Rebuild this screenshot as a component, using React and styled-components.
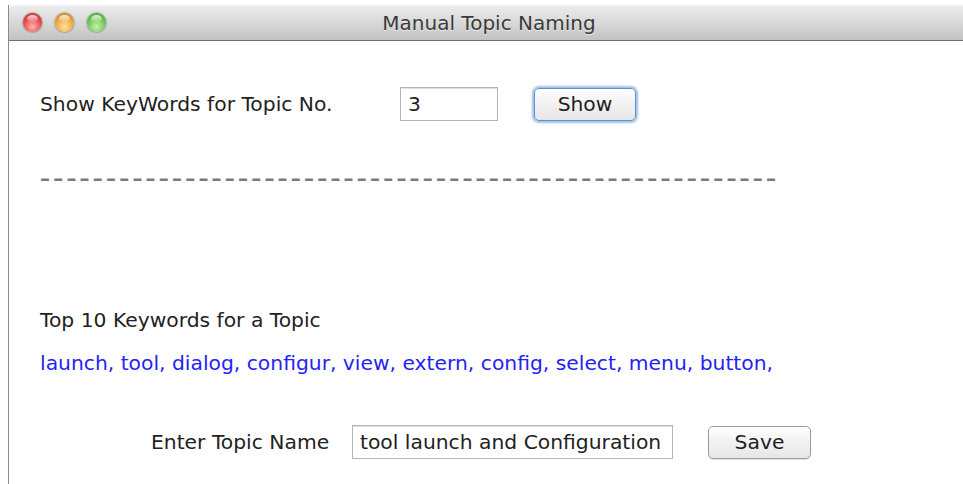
import React from "react";
import styled, { createGlobalStyle } from "styled-components";

const Global = createGlobalStyle`
  html, body { margin: 0; padding: 0; background: #ffffff; }
  body { font-family: "DejaVu Sans", "Noto Sans", sans-serif; }
`;

const Window = styled.div`
  margin: 5px 0 0 8px;
  height: 479px;
  border-left: 1px solid #8a8a8a;
  display: flex;
  flex-direction: column;
  background: #ffffff;
`;

const TitleBar = styled.div`
  position: relative;
  height: 34px;
  display: flex;
  align-items: center;
  justify-content: center;
  background: linear-gradient(#ececec, #d6d6d6 55%, #c2c2c2);
  border-top: 1px solid #f4f4f4;
  border-bottom: 1px solid #6e6e6e;
  border-top-left-radius: 5px;
`;

const Lights = styled.div`
  position: absolute;
  left: 14px;
  top: 7px;
  display: flex;
  gap: 13px;
`;

const Light = styled.span`
  width: 19px;
  height: 19px;
  border-radius: 50%;
  box-shadow: 0 0 1px 1px rgba(0, 0, 0, 0.22);
  background: radial-gradient(circle at 50% 72%, ${(p) => p.$glow} 0%, ${(p) => p.$base} 55%, ${(p) => p.$dark} 100%);
  position: relative;
  &::after {
    content: "";
    position: absolute;
    left: 4px;
    right: 4px;
    top: 2px;
    height: 7px;
    border-radius: 50%;
    background: linear-gradient(rgba(255, 255, 255, 0.8), rgba(255, 255, 255, 0.1));
  }
`;

const Title = styled.div`
  font-size: 20px;
  color: #3a3a3a;
  text-shadow: 0 1px 0 rgba(255, 255, 255, 0.6);
  margin-left: 6px;
`;

const Content = styled.div`
  padding: 46px 0 0 31px;
  display: flex;
  flex-direction: column;
  font-size: 20.3px;
  color: #222;
`;

const Row = styled.div`
  display: flex;
  align-items: center;
  height: 34px;
  margin-left: ${(p) => p.$indent || 0}px;
  margin-top: ${(p) => p.$top || 0}px;
`;

const Label = styled.span`
  width: ${(p) => p.$w}px;
  flex: none;
  white-space: nowrap;
`;

const Field = styled.div`
  width: ${(p) => p.$w}px;
  height: 34px;
  box-sizing: border-box;
  border: 1px solid #b4b4b4;
  box-shadow: inset 0 1px 0 #e2e2e2;
  padding-left: 7px;
  display: flex;
  align-items: center;
  white-space: nowrap;
  overflow: hidden;
  color: #1e1e1e;
`;

const Button = styled.div`
  margin-left: ${(p) => p.$gap}px;
  width: ${(p) => p.$w}px;
  height: 33px;
  box-sizing: border-box;
  border-radius: 5px;
  display: flex;
  align-items: center;
  justify-content: center;
  background: linear-gradient(#ffffff, #f1f1f1 50%, #e6e6e6);
  border: 1px solid ${(p) => (p.$focus ? "#5f93d0" : "#9c9c9c")};
  box-shadow: ${(p) =>
    p.$focus ? "0 0 2px 2px rgba(110, 160, 220, 0.65)" : "0 1px 1px rgba(0,0,0,0.12)"};
  color: #1e1e1e;
`;

const Dashes = styled.div`
  margin-top: 44px;
  height: 26px;
  line-height: 26px;
  font-size: 20px;
  font-weight: 700;
  color: #7a7a7a;
  white-space: nowrap;
  letter-spacing: 3.2px;
`;

const Heading = styled.div`
  margin-top: 116px;
  height: 26px;
  line-height: 26px;
`;

const Keywords = styled.div`
  margin-top: 17px;
  height: 26px;
  line-height: 26px;
  color: #2424f2;
`;

export default function App() {
  return (
    <>
      <Global />
      <Window>
        <TitleBar>
          <Lights>
            <Light $base="#e8474a" $glow="#ffb3b0" $dark="#a82226" />
            <Light $base="#eea53b" $glow="#ffe39a" $dark="#b4701a" />
            <Light $base="#6cc456" $glow="#c9f2a8" $dark="#3b8a2c" />
          </Lights>
          <Title>Manual Topic Naming</Title>
        </TitleBar>
        <Content>
          <Row>
            <Label $w={360}>Show KeyWords for Topic No.</Label>
            <Field $w={98}>3</Field>
            <Button $gap={36} $w={102} $focus>Show</Button>
          </Row>
          <Dashes>{"\u2013".repeat(56)}</Dashes>
          <Heading>Top 10 Keywords for a Topic</Heading>
          <Keywords>
            launch, tool, dialog, configur, view, extern, config, select, menu, button,
          </Keywords>
          <Row $indent={111} $top={49}>
            <Label $w={201}>Enter Topic Name</Label>
            <Field $w={321}>tool launch and Configuration</Field>
            <Button $gap={35} $w={103}>Save</Button>
          </Row>
        </Content>
      </Window>
    </>
  );
}
